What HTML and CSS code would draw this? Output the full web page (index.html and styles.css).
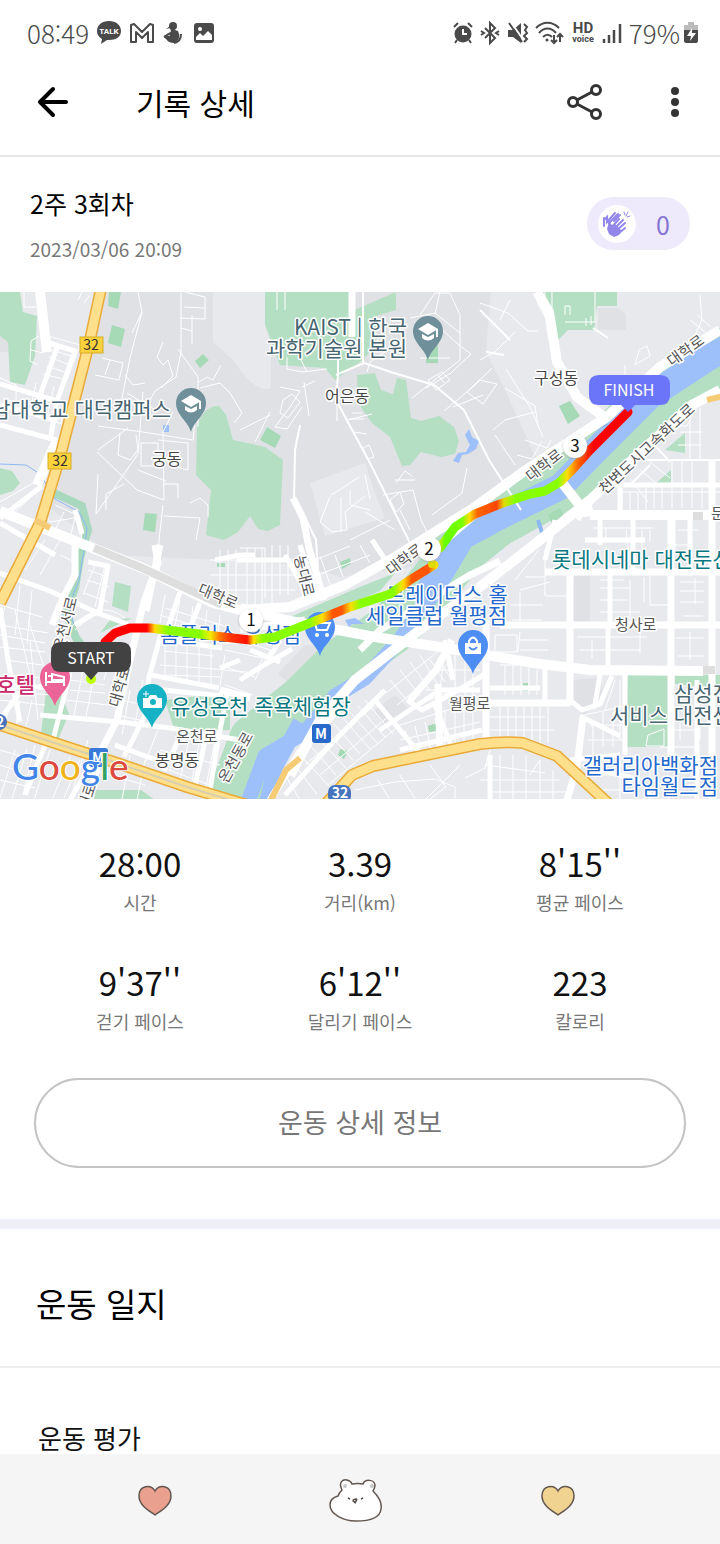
FILE: index.html
```html
<!DOCTYPE html>
<html lang="ko">
<head>
<meta charset="utf-8">
<meta name="viewport" content="width=device-width, initial-scale=1">
<title>기록 상세</title>
<link rel="stylesheet" href="styles.css">
</head>
<body>
<div class="app">
  <div class="status">
    <div class="status-group">
      <span class="status-time">08:49</span>
      <svg class="ico" width="26" height="26" viewBox="0 0 26 26"><path d="M13 1C6 1 1 5 1 11c0 4 2 6 5 8L5 24l6-4h2c7 0 12-3 12-9S20 1 13 1Z" fill="#4a4a4a"/><text x="13" y="14" class="talk">TALK</text></svg>
      <svg class="ico" width="26" height="22" viewBox="0 0 26 22"><path d="M2 20V3l3-1 8 8 8-8 3 1v17h-5V10l-6 6-6-6v10Z" fill="none" stroke="#4a4a4a" stroke-width="2" stroke-linejoin="round"/></svg>
      <svg class="ico" width="22" height="24" viewBox="0 0 22 24"><circle cx="11" cy="5" r="4" fill="#4a4a4a"/><path d="m8 5-4 3 4-1 1 3-2 3 1 2-5-1c-1 1-2 2 1 4 2 3 5 4 8 4 4-2 6-5 5-9l-1-3-3-1V8Z" fill="#4a4a4a"/><path d="m2 16 6-4M19 13c0 5-2 8-7 9" stroke="#4a4a4a" stroke-width="2" fill="none"/></svg>
      <svg class="ico gallery" width="22" height="22" viewBox="0 0 22 22"><path fill-rule="evenodd" fill="#4a4a4a" d="M4 1h14q3 0 3 3v14q0 3-3 3H4q-3 0-3-3V4q0-3 3-3Zm-1 14v3h16v-5l-4-4-5 5-3-3Z"/><circle cx="7" cy="7" r="2" fill="#fff"/></svg>
    </div>
    <div class="status-group right">
      <svg class="ico" width="20" height="22" viewBox="0 0 20 22"><circle cx="10" cy="12" r="8.500" fill="#4a4a4a"/><path d="m1 5 4-4M19 5l-4-4M4 18l-2 3M16 18l2 3" stroke="#4a4a4a" stroke-width="2"/><path d="M10 7v5h4" stroke="#fff" stroke-width="2" fill="none"/></svg>
      <svg class="ico" width="20" height="22" viewBox="0 0 20 22"><path d="m5 6 10 10-5 5V1l5 5L5 16M1 9l3 2-3 2M19 9l-3 2 3 2" fill="none" stroke="#4a4a4a" stroke-width="2"/></svg>
      <svg class="ico" width="21" height="22" viewBox="0 0 21 22"><path d="M1 8h5l8-7v20l-8-6H1Z" fill="#4a4a4a"/><path d="M4 0 17 19" stroke="#fff" stroke-width="2"/><path d="M2 1 15 20" stroke="#4a4a4a" stroke-width="2"/><path d="m17 2 3 3-2 3 2 3-3 3 3 3-3 3" fill="none" stroke="#4a4a4a" stroke-width="2"/></svg>
      <svg class="ico" width="29" height="24" viewBox="0 0 29 24"><g fill="none" stroke="#4a4a4a" stroke-width="2"><path d="M1 7c7-7 16-7 23 0M4 12c5-6 12-6 17 0M8 16c3-3 6-3 9 0"/><path d="M19 14v8m-3-3 3 3 3-3M25 21v-8m-3 3 3-3 3 3"/></g><circle cx="12" cy="19" r="1.500" fill="#4a4a4a"/></svg>
      <svg class="ico" width="24" height="24" viewBox="0 0 24 24"><text x="12" y="12" class="hd">HD</text><text x="12" y="21" class="voice">voice</text></svg>
      <svg class="ico" width="20" height="22" viewBox="0 0 20 22"><path d="M2 17v4M7 13v8M12 8v13M18 2v19" stroke="#4a4a4a" stroke-width="2.500"/></svg>
      <span class="status-time">79%</span>
      <svg class="ico" width="16" height="24" viewBox="0 0 16 24"><path d="M5 1h6v3h4v6H1V4h4Z" fill="#bbb"/><path d="M1 9h14v11q0 2-2 2H3q-2 0-2-2Z" fill="#4a4a4a"/><path d="m9 7-5 8h4l-1 5 6-8H9Z" fill="#fff"/></svg>
    </div>
  </div>

  <header class="header">
    <button class="icon-button back" aria-label="뒤로"><svg width="32" height="32" viewBox="0 0 32 32"><path d="M29 16H3M16 3 3 16l13 13" fill="none" stroke="#000" stroke-width="4" stroke-linecap="round" stroke-linejoin="round"/></svg></button>
    <h1 class="title">기록 상세</h1>
    <button class="icon-button share" aria-label="공유"><svg width="36" height="38" viewBox="0 0 36 38"><g fill="none" stroke="#333" stroke-width="3"><path d="m10 17 15-8M10 21l15 8"/><circle cx="6" cy="19" r="4.500"/><circle cx="29" cy="7" r="4.500"/><circle cx="29" cy="31" r="4.500"/></g></svg></button>
    <button class="icon-button more" aria-label="더보기"><svg width="10" height="32" viewBox="0 0 10 32"><g fill="#333"><circle cx="5" cy="5" r="4"/><circle cx="5" cy="16" r="4"/><circle cx="5" cy="27" r="4"/></g></svg></button>
  </header>

  <main class="content">
    <section class="summary">
      <div>
        <h2 class="session">2주 3회차</h2>
        <time class="date">2023/03/06 20:09</time>
      </div>
      <button class="clap" aria-label="박수 0">
        <span class="clap-icon"><svg width="30" height="30" viewBox="0 0 30 30"><g fill="none" stroke="#9286ea" stroke-width="2" stroke-linecap="round"><path d="M2 17V9M3 10l2-2v5l8-9M7 14l9-9M12 12l6-6"/><path d="m8 19-1-8M10 18l7-8M12 20l9-9M14 22l9-8M17 24l6-5"/><path d="m22 3 1 3M26 3l-2 4M28 7l-3 1" stroke-width="1"/></g><path d="m7 13 4 4 2-2 7 7-3 4-5 2-5-3-2-5Z" fill="#9286ea"/></svg></span>
        <span class="clap-count">0</span>
      </button>
    </section>

    <svg class="map" viewBox="0 292 720 507" role="img" aria-label="달리기 경로 지도">
      <defs>
        <linearGradient id="pace" gradientUnits="userSpaceOnUse" x1="0" y1="0" x2="720" y2="0">
          <stop offset=".204" stop-color="#f00"/><stop offset=".215" stop-color="#fd0"/><stop offset=".232" stop-color="#8f0"/><stop offset=".278" stop-color="#8f0"/><stop offset=".292" stop-color="#ee0"/><stop offset=".305" stop-color="#f70"/><stop offset=".32" stop-color="#f30"/><stop offset=".343" stop-color="#f10"/><stop offset=".352" stop-color="#fd0"/><stop offset=".365" stop-color="#8f0"/><stop offset=".43" stop-color="#8f0"/><stop offset=".448" stop-color="#fd0"/><stop offset=".462" stop-color="#f50"/><stop offset=".475" stop-color="#f50"/><stop offset=".487" stop-color="#fd0"/><stop offset=".5" stop-color="#8f0"/><stop offset=".547" stop-color="#8f0"/><stop offset=".56" stop-color="#fd0"/><stop offset=".572" stop-color="#f50"/><stop offset=".595" stop-color="#f50"/><stop offset=".606" stop-color="#fd0"/><stop offset=".618" stop-color="#6f0"/><stop offset=".642" stop-color="#7f0"/><stop offset=".652" stop-color="#fd0"/><stop offset=".663" stop-color="#f60"/><stop offset=".69" stop-color="#f40"/><stop offset=".7" stop-color="#dd0"/><stop offset=".715" stop-color="#8f0"/><stop offset=".775" stop-color="#8f0"/><stop offset=".788" stop-color="#fd0"/><stop offset=".803" stop-color="#f60"/><stop offset=".825" stop-color="#f00"/>
        </linearGradient>
        <path id="pin" d="M0 29C-3 18-15 12-15 0a15 15 0 0 1 30 0C15 12 3 18 0 29Z"/>
        <g id="cap" fill="#fff"><path d="m-10-2 10-6 10 6-10 6Z"/><path d="M-6 3v4q6 5 12 0V3L0 6ZM8-2h2v8H8Z"/></g>
      </defs>
      <rect class="land" x="0" y="292" width="720" height="508"/>
      <g class="campus">
        <path d="M105 292h108v50l22 20q20 32 36 26V292h220l-5 60 20 40 50 110-75 20-70 45-70 10-40-12-80-5-110-5-65-50L70 430Z"/>
        <path d="M598 308h20l8 6v16h-28Z"/>
        <path d="M0 292h20v60H0ZM570 577l20-3v48h-20ZM375 710l20-15 15 15-25 20ZM571 680l30-2 2 20-20 18-12-12ZM305 645l40 3-25 22-30 14-12-10Z"/>
      </g>
      <path class="land" d="m310 483 55-20 10 30 10 25-60 18Z"/>
      <g class="park">
        <path d="M0 292h20l3 20 14 4-2 40-10 29-15-3-2-40-8-6ZM0 468l12 3 8 12-7 8-13 4ZM197 425q8-20 22-19l7 9 7 25 32 7 18 13-3 65-12 6-10-2-8-13-12 16-14 8-18-5 5-45-15-15ZM265 292h85v20l46-20v18l-20 6v30l-16 16-25 18-10-12-45-3-15-40ZM357 375l18-2 6 17 12 4 4-16 9 2 5 38 10 3 18-5 15 11 5 14-4 13-14 3-20-5-11 13-8 1-12-29-18-14-14-20Z"/>
        <path d="M542 292h75v14h-20l-3 24h-26l-14 14-8-20ZM115 582l16 4-3 26-16-6ZM165 700l65-8v38l-55 2ZM46 692l11-8 12 30-12 28H40ZM628 674h40v73h-44ZM675 675h45v13l-45-4ZM96 790l45 0 14 10H92ZM110 620l22-2-32 15ZM290 617l65-28 40-16-15 18-70 30ZM665 450l20-17v20ZM655 484l16-14v12Z"/>
        <path class="river-bank" d="m750 340-40 24-60 38-50 50-40 34-65 36-35 28-35 45-35 35-50 35-35 35-50 40-30 80"/>
        <path class="creek-bank" d="m52 492 30 14 6 24-8 28-5 30-9 25 10 25 15 20"/>
      </g>
      <g class="park dark">
        <path d="M109 292h12l-3 17-10-3ZM112 325l13 4-4 18-13-4ZM195 361l8-7 6 6-9 8ZM145 513l12 1-2 18-12-2ZM267 427l14 9-6 12-15-8ZM426 345h12v18h-12ZM559 406l11-5 10 15-12 8ZM340 562l10-4 1 6-9 5ZM428 726l9-3 0 8-8 1ZM340 749l8 2-4 8-6-4ZM217 563h8v4h-8ZM523 683h5v8h-5ZM548 515l12-7 4 8-12 8Z"/>
      </g>
      <g class="water">
        <path class="river" d="m740 340-35 20-55 36-50 50-40 41-65 32-33 18-20 34-20 30"/>
        <path class="river thin" d="m428 598-28 42-35 38-30 18-30 36-40 24-20 54M300 722l-25 46-10 40"/>
        <path d="m465 435 4-6 3 8 7 4-3 8-8 5-6 1-3 8-6-2 5-8 8-1 4-7ZM163 425h6v7h-6ZM345 620l10-2 9 6-12 0-3 3Z"/>
        <path class="brook" d="m0 464 26 1 14 9 15 25 24 13 8 16-3 22-5 30-10 25 5 20"/>
        <path class="brook wide" d="m600 422 12 8M538 520l5 16"/>
      </g>

      <g class="street minor">
        <path d="M45 335l35 10-13 35-24-6M38 365l-8-4 1-20 8-5M52 350l22 7M49 357l21 8M47 366l20 7M31 350l12 3M24 292v15h12M82 292l-4 8M90 295l-6 8M0 378l16 7v16M36 383l-6 28M8 400l36 14-2-22M54 386l-8 36M60 410l2 14-18-6M0 502l35-20M38 490l-28 27 25 10M55 505l22 10 5 25-30-8M64 512l-10 20M75 517l-5 22M42 510l8 12 30-5"/>
        <path d="M138 292l4 20-12 46-8 40 4 20M142 312l-10 21M102 358l21 5-4 17-24-5M110 360l-5 15M125 375l8 10 12-2M127 393l13 8 18 10M181 292v60l-5 25-21 14-9 16M178 349l20 28v50M185 292l20 5v22l-25-1M184 307l20 1M192 315v29M181 328l11 3M163 342l-6 15 6 8 5-5 5 16-12 12M199 382l8-5 6 3 8-15M200 388l20-5 10 10 12 20-8 10M143 392l-5 62-42 60 2-40M98 426l45 6 50 8 3-30M98 450l30-22M120 433l-2 22 12 5 8-10-2-15M97 452l40 38 27 10M164 500l-1-68 10-20M141 443h17v23h-17ZM158 440l30 3v27l-20-5M164 484h14v14M138 470l28 11M124 484l-18 10 0 16M163 505l-4 35 0 40M164 516l36 2-4 22M190 503l10-5 8 7v12"/>
        <path d="M287 357l0 12 15 3 25-3M300 358l7 14M280 387l20 4-10 16-15 20 12 2 15-22M283 400l9-6 8 8-12 16-8-5ZM302 387l13-6M304 382l5 34M337 385v36M350 419h14M347 420l25-6M353 432l14 2M270 412l-15 30M240 430l30-15M363 448l6-3 5 12-6 2ZM352 413h10M367 372l3-10 15-10M396 373l-5 0M410 318l25-5 25 20M440 328l19 17 12 9-20 19-25 15M420 358h30M440 292l-5 22M460 346v14M420 315l15-22h15l10 22 0 30"/>
        <path d="M428 380l14-8 8 8-14 10ZM438 375l6 8M444 411l30-25 18-18M412 398l48-38M467 392l12-12 18 4-14 20ZM453 407l30-12M285 292v18M277 292v18M331 495l10-6 18-12M330 497l-10 25 12 10 15-2-2-18 20-16M341 497l0 35M350 490l0 15 20 5M365 475l5 24M395 480h20M396 483l9-12 7 5M383 495l30-5 8 30 10 20M390 500l10-8 4 12-8 8ZM432 515l30-22 5-25"/>
        <path d="M480 303l28 10 20 18 10 0M515 332l-20 20-15 8M506 369l25 40 12 28M493 430l12-10 30-8M538 292v12l10 18M545 292v14M552 292v16M565 315v-9h5v9M586 318v8M591 316v9M595 292v30h-30M505 388l30 18 3 20M495 435l20 30M510 300l-10 20M525 440l22 8 4-8M517 455l15 4 10-18M635 365l4-15 8-4 3 10-12 7ZM700 295l2 25-10 22M690 320l18 14M697 315l14 12M625 365v12"/>
        <path d="M695 410l-8 16h-18M690 420v40M680 432h22M678 445h24M700 408v52"/>
        <path d="M630 478l18 24M640 470l20 16M650 462l20 16M622 488v22M630 492v18M638 492v18M646 488v22M654 487v22M662 487v22M672 460v48M682 460v48M692 460v48M702 487v22M710 487v22M622 492h98"/>
        <path d="M593 528h60M600 540v-12M606 540v-12M626 530l3 24M634 530v22M642 530v18M650 530v12M668 545h24M678 530h20"/>
        <path d="M515 580l24-30M520 590l30-8M525 577l20 0M545 550v46M570 596h-24M520 592v32M510 605h33M512 620h30M600 580h24M600 588h30M600 600h27M600 612h40M650 575v30h20M630 580v40M644 577v25M680 582h24M695 578v26M680 591h24M680 602h24M683 616h20M495 635h22v17h-22ZM520 632l-2 20M520 640h28M520 650h28M577 637h70M580 650h60M592 640v18M607 632v24M676 638h28M690 632v28M678 656h26M640 633v20"/>
        <path d="M500 665h40M505 665v30M513 665v30M521 665v30M529 665v30M537 670v25M490 687h50M490 717h55M500 707v36M508 707v36M516 707v36M524 707v36M532 707v36M540 707v36M548 707v36M490 730h64M615 680l-10 30M600 680l-6 30M580 716l45-10M593 720v35M603 712v35M613 712v35M620 680v60M590 725h34M588 740h35M585 765h40M600 775h30M620 755v45M635 755v45M650 765v35M590 790h45M660 747h40M680 720v20M700 710v30M675 730h20M648 735l16-6v17h-18Z"/>
      </g>
      <g class="street minor">
        <path d="M240 548h25v50M247 548v60M255 548v60M262 548v60M272 545v60M280 545v50M288 545v50M220 550v50M228 550v50M236 550v50M210 560h85M210 575h85M210 590h85M300 550l20 50M310 550l15 46M320 556l12 34M335 555l8 22M300 566l50-20M305 580l65-25M310 594l70-27M360 545l10 18M375 540l8 18M350 540l40-20M395 530l-30-18M400 510l10 20"/>
        <path d="M165 595l-5 28M180 600l-5 26M193 606l-3 24M207 610l-3 26M220 615l-2 20M165 608l60 18M160 615l55 17M165 640l55 8M164 651l50 5M160 665l55 4M165 675l55 2M165 637v40M176 645v36M187 645v36M199 645v36M211 645v40M225 650l38 8-8 15-40-4M240 640l30 10-15 30M220 665l35 12M225 655l-5 30M225 685l28 10M180 735l-10 35M190 735l-10 45M200 738l-8 43M215 740l-10 52M155 765l55 20M160 750l60 15M228 700l-6 25"/>
        <path d="M0 625l48 8M0 635l45 8M0 647l45 5M5 660l45 6M10 675l30 3M0 605l42 12M10 580l-8 40M20 585l-5 50M32 590l-5 54M15 610l15 65M28 620l15 44M0 690l50 5M0 700l45 5M10 700l-6 30M20 700l-5 32M32 700l-8 35M30 640l8 80M0 750l20 6M0 765l18 6M0 780l35 8M35 745l-12 50M50 750l-16 50M70 757l-18 43M80 760l-16 38M0 798l15-48M12 799l15-50M40 575l20-35M60 555l15 7M25 570l20-30"/>
        <path d="M88 570l20 7M87 580l22 7M84 593l24 9M95 565l-12 30M105 565l-10 42M70 628q30-30 55-10M75 630q15-15 25-16M82 650l20-8M95 652l15-8M112 650l-8 30M120 650l-6 30M70 680l35 5M70 690l35 3M66 700l42 5M83 670l-10 50M95 670l-10 52M88 740l-15 50M105 745l-12 50M75 765l70 20M130 755l-8 45M145 760l-8 40M160 725l-18 45M130 690l-8 45M143 680l-8 45M120 700l25 5M115 715l25 5"/>
      </g>
      <g class="street minor">
        <path d="M390 680l20 24M400 670l20 26M410 662l20 28M420 655l18 30M430 660l15 22M438 660l14 20M386 693l60-48M397 705l50-40M430 700l40-18M310 745l26 30M318 738l28 30M326 731l28 30M334 724l26 30M342 717l28 32M350 712l28 32M358 706l28 32M365 700l28 34M305 765l70-60M320 775l70-60M328 785l72-60M300 755l30 32M292 762l25 32M285 775l15 25M405 730l10 30M415 726l8 32M425 722l7 33M435 718l6 35M445 710v42M455 705v42M464 705v42M473 705v40M400 740l80-18M400 725l80-25M405 755l80-18M425 690h55M445 650l-5 40M455 652v40M465 655v40M473 655v50M440 670h40"/>
        <path d="M355 790l40-8 40-3 20 8v13M378 780l12 20M400 775l16 25M430 765l16 22-20 15M490 750l-5 18-20 10M500 755v45M513 755v45M526 755v45M540 760v40M553 770v30M485 765l60 8M480 780h80M490 792h80M460 765l-35 35M540 760l-10 15"/>
      </g>
      <g class="street medium">
        <path d="M40 292l5 50M0 384l57 17-7 40M0 405l25 6 32 10M58 295M0 425l56 15-16 43M0 518l42-32M55 555l-55-32M46 342l29 9-18 50M58 345l-20 56M0 573l50 18 50 23 33 12M0 607l8 53 12 62M75 510l7 24M163 627l-14 50-5 40-20 40M0 685l60 3M0 720l20-28M40 715l80 7 50 6 70 12M70 673l-17 67M167 640l55 8M184 728l-20 43M207 733l-12 52M228 690l-10 50-8 50M151 675l68 13M163 690l60 6M115 745l50 18M90 765l-20 35M45 745l-20 50M88 562l20 4-8 44-25 15M180 592l-12 35M200 603l-12 30M215 560l25-5 15 0M240 660l-20 8M240 680l24-15 28-16M250 650l30 12M280 640l-12 20"/>
        <path d="M300 545l15 45M285 555l17 30 5 18M237 560h50M372 540l20 30M480 512l-35 30M407 700l15 10 40-22 25-15M375 700l50 60M385 690l-55 55-45 50M445 640l8 40M480 690h-40l-60 40M400 750l82-20M435 705l18 45M590 500l-12 20M555 520l-10 40M600 515v30M633 515v55M585 540h60M613 485h110M620 470v42M673 515v36M690 515v60M600 675l-5 30M625 675v80M570 670l0 30 12 10 18-6 12-28M490 688h50M545 660v40M580 716l40 20M570 760l50-5M600 770l40 10M697 680v120M490 755v45M610 575v50M608 625v40"/>
      </g>
      <g class="street thin">
        <path d="M363 292v70M300 425l-5 25-1 50 10 15 12 25 4 60M338 345v30l-2 25 35 65 45 90M336 375l28-12 30 10 40 12 30 25 25 50 32 50M480 310l30 30M504 355l-18-3M593 328l15 10M630 460h90M650 465l-20 20M650 440l20 22"/>
      </g>
      <g class="street major">
        <path class="w6" d="M75 540v35l-13 25-10 25M155 545l3 18-15 42-16 68-10 47-17 33-10 47M352 292v45M293 498l10 20 6 30 15 52M570 572v133M671 515v240M712 460v340M486 620v120M545 572h175M500 625h220M490 703h80M583 717l-6 50-10 33M452 640l-16 30-26 30M440 754l-2-70M270 800l30-48 40-45M220 690l30 8"/>
        <path class="w9" d="M0 511l85 34 60 24 68 34 27 7 50-3 55-22 50-28 80-50 48-35 84-55 53-50 60-37M537 292l12 20 8 50 20 35 30 22M40 292l7 60M57 440l-20 45M560 480l25 32 8-2M720 390l-28 15-60 55-42 40-50 40-60 47-50 35-75 58-35 40-30 55M590 515h130M240 608l45 12 90 17 65 10 40 7 60 10 50 6 113 1"/>
        <path class="w6" d="M240 630l65-10M360 650l20-20 90-55 30-14M160 545l-14 66"/>
        <path class="tunnel" d="m94 548 48 20 65 30 15 7M693 516h10M703 670h12"/>
      </g>
      <path class="river narrow" d="m455 562-27 38-15 22"/>
      <g class="highway">
        <path class="case" d="M102 284 90 340 60 457 40 523 28 547 0 603M0 725l67 22 50 16 70 24 60 18M322 808l30-33 21-9 107-22q25-3 43-1l34 13 25 23 30 28"/>
        <path d="M102 284 90 340 60 457 40 523 28 547 0 603M0 725l67 22 50 16 70 24 60 18M322 808l30-33 21-9 107-22q25-3 43-1l34 13 25 23 30 28"/>
        <path class="ramp" d="m300 758-14 12-16 32M707 400l20-5M35 520l15 8"/>
        <path class="centre" d="m0 725 67 22 50 16 70 24 60 18"/>
      </g>

      <g class="shield"><rect x="80" y="337" width="23" height="16"/><rect x="48" y="453" width="23" height="16"/></g>
      <g class="shield-text"><text x="91" y="350">32</text><text x="60" y="466">32</text></g>
      <rect x="328" y="785" width="23" height="18" rx="7" fill="#4774bd"/><text class="badge-text" x="340" y="798">32</text>
      <circle cx="-1" cy="722" r="8" fill="#4774bd"/><text class="badge-text" x="0" y="727">2</text>
      <rect x="312" y="724" width="19" height="19" rx="3" fill="#2969c9"/><text class="badge-text" x="321" y="739">M</text>
      <rect x="89" y="748" width="19" height="19" rx="3" fill="#3979d9"/><text class="badge-text" x="98" y="763">M</text>

      <g class="poi slate"><text class="end" x="407" y="335">KAIST | 한국</text><text class="end" x="407" y="356">과학기술원 본원</text><text class="end" x="171" y="417">남대학교 대덕캠퍼스</text><text x="610" y="723">서비스 대전센터</text><text x="674" y="701">삼성전자</text></g>
      <g class="poi teal"><text x="552" y="567">롯데시네마 대전둔산</text><text x="171" y="714">유성온천 족욕체험장</text></g>
      <g class="poi blue"><text x="386" y="602">트레이더스 홀</text><text x="366" y="623">세일클럽 월평점</text><text x="160" y="642">홈플러스 유성점</text><text class="end" x="718" y="773">갤러리아백화점</text><text class="end" x="718" y="794">타임월드점</text></g>
      <text class="poi pink end" x="35" y="692">호텔</text>
      <g class="place"><text x="325" y="402">어은동</text><text x="152" y="465">궁동</text><text x="534" y="384">구성동</text><text x="155" y="766">봉명동</text></g>
      <g class="road-name">
        <text x="615" y="630">청사로</text><text x="449" y="709">월평로</text><text x="176" y="742">온천로</text><text x="711" y="519">둔산</text>
        <text transform="translate(672 367) rotate(-36)">대학로</text><text transform="translate(531 482) rotate(-38)">대학로</text><text transform="translate(391 576) rotate(-37)">대학로</text><text transform="translate(197 593) rotate(23)">대학로</text>
        <text transform="translate(605 495) rotate(-43)">천변도시고속화도로</text><text transform="translate(119 708) rotate(-74)">대학로</text><text transform="translate(64 652) rotate(-76)">온천서로</text><text transform="translate(294 557) rotate(76)">농대로</text><text transform="translate(227 784) rotate(-61)">온천동로</text><text transform="translate(88 811) rotate(-72)">대로</text>
      </g>

      <g class="pins">
        <use href="#pin" x="428" y="331" fill="#6f8f9b"/><use href="#cap" x="428" y="331"/>
        <use href="#pin" x="191" y="403" fill="#6f8f9b"/><use href="#cap" x="191" y="403"/>
        <use href="#pin" x="320" y="627" fill="#4d8df4"/><path d="M311 620h3l3 10h10l3-7h-13" fill="none" stroke="#fff" stroke-width="2"/><circle cx="317" cy="635" r="2" fill="#fff"/><circle cx="327" cy="635" r="2" fill="#fff"/>
        <use href="#pin" x="473" y="645" fill="#4d8df4"/><path d="M465 643h16v11h-16Z" fill="#fff"/><path d="M469 644v-3q4-7 8 0v3" fill="none" stroke="#fff" stroke-width="2"/><path d="M469 647q4 5 8 0" fill="none" stroke="#4d8df4" stroke-width="2"/>
        <use href="#pin" x="55" y="677" fill="#ec6398"/><path d="M46 672v14M46 682h18v4M64 684v-7l-12-3v6h12M48 676h3" fill="none" stroke="#fff" stroke-width="2"/>
        <use href="#pin" x="152" y="699" fill="#16b1c4"/><path d="M143 698h5l2-3h6l2 3h4v10h-19Z" fill="#fff"/><circle cx="153" cy="702" r="3" fill="#16b1c4"/><path d="M146 691v6M143 694h6" stroke="#fff" stroke-width="1"/>
      </g>

      <path class="route" d="M105 642 115 633 130 628H150L215 636 250 640 275 637 310 623 350 607 390 594 410 580 434 565M440 548 455 527 475 514 500 504 530 494 545 491 560 482 572 470 590 450 610 430 628 412"/>
      <circle cx="91" cy="679" r="5" fill="#bf0"/>
      <circle cx="432" cy="564" r="4" fill="#dd0"/>
      <g class="marker"><circle cx="251" cy="620" r="12"/><circle cx="429" cy="549" r="12"/><circle cx="575" cy="446" r="12"/></g>
      <g class="marker-text"><text x="251" y="626">1</text><text x="429" y="555">2</text><text x="575" y="452">3</text></g>
      <path d="M61 642h60q10 0 10 10v10q0 10-10 10H98l-7 8-7-8H61q-10 0-10-10v-10q0-10 10-10Z" fill="#424242"/><text class="tag" x="91" y="664">START</text>
      <path d="M599 375h61q10 0 10 10v10q0 10-10 10h-25l-7 7-7-7h-22q-10 0-10-10v-10q0-10 10-10Z" fill="#6a75fa"/><text class="tag" x="629" y="396">FINISH</text>
      <text class="google" x="12" y="780"><tspan fill="#4285e8">G</tspan><tspan fill="#dc4a3e">o</tspan><tspan fill="#f0b41c">o</tspan><tspan fill="#4285e8">g</tspan><tspan fill="#34a265">l</tspan><tspan fill="#dc4a3e">e</tspan></text>
    </svg>

    <section class="stats-section">
      <dl class="stats">
        <div class="stat"><dt>시간</dt><dd>28:00</dd></div>
        <div class="stat"><dt>거리(km)</dt><dd>3.39</dd></div>
        <div class="stat"><dt>평균 페이스</dt><dd>8'15''</dd></div>
        <div class="stat"><dt>걷기 페이스</dt><dd>9'37''</dd></div>
        <div class="stat"><dt>달리기 페이스</dt><dd>6'12''</dd></div>
        <div class="stat"><dt>칼로리</dt><dd>223</dd></div>
      </dl>
      <button class="detail-button">운동 상세 정보</button>
    </section>

    <section class="diary">
      <h2 class="diary-title">운동 일지</h2>
      <h3 class="diary-label">운동 평가</h3>
    </section>
  </main>

  <nav class="tabs">
    <button class="tab" aria-label="최근 앱"><svg width="36" height="34" viewBox="0 0 36 34"><path d="M18 7C14 0 2 1 2 12c0 9 9 14 16 19 7-5 16-10 16-19C34 1 22 0 18 7Z" fill="#e9a08e" stroke="#625750" stroke-width="1.500"/></svg></button>
    <button class="tab" aria-label="홈"><svg width="54" height="48" viewBox="0 0 54 48"><path d="M13 13C9 5 14 2 18 3q4 1 5 4 6-1 11 0c2-5 11-5 12 1q0 3-2 6c6 6 9 13 8 18-1 9-12 12-25 12S1 37 1 28c0-6 4-8 8-9q1-3 4-6Z" fill="#fff" stroke="#625750" stroke-width="1.500"/><ellipse cx="16" cy="9" rx="2" ry="2" fill="#c8c8c8"/><ellipse cx="43" cy="9" rx="2" ry="2" fill="#c8c8c8"/><path d="m19 21 2 1M34 21l-2 1M28 22q-4 0-4 2 3 2 4-2M25 25l2 1" fill="none" stroke="#554e49" stroke-width="1.500"/></svg></button>
    <button class="tab" aria-label="뒤로 가기"><svg width="36" height="34" viewBox="0 0 36 34"><path d="M18 7C14 0 2 1 2 12c0 9 9 14 16 19 7-5 16-10 16-19C34 1 22 0 18 7Z" fill="#f0d291" stroke="#625750" stroke-width="1.500"/></svg></button>
  </nav>
</div>
</body>
</html>
```

FILE: styles.css
```css
* { box-sizing: border-box; }

body {
  margin: 0;
  background: #fff;
  color: #111;
  font-family: "Noto Sans CJK KR", sans-serif;
}

h1, h2, h3, dl, dd { margin: 0; font-weight: 400; }

button {
  border: 0;
  padding: 0;
  background: none;
  color: inherit;
  font: inherit;
  cursor: pointer;
}

svg { display: block; }

.app {
  display: flex;
  flex-direction: column;
  height: 100vh;
}

/* Status bar */
.status {
  display: flex;
  flex: none;
  justify-content: space-between;
  height: 66px;
  padding: 0 21px 0 27px;
}

.ico { overflow: visible; }
.status-group { display: flex; align-items: center; gap: 7px; }
.status-group.right .status-time + .ico { margin-left: -4px; }
.gallery { margin-left: 2px; }

.status-time {
  color: #4a4a4a;
  font-size: 26px;
  font-weight: 300;
  line-height: 34px;
}

.talk, .hd, .voice { text-anchor: middle; font-family: Roboto, sans-serif; font-weight: 700; }
.talk { fill: #fff; font-size: 8px; }
.hd { fill: #4a4a4a; font-size: 15px; }
.voice { fill: #4a4a4a; font-size: 9px; }

/* App header */
.header {
  display: flex;
  flex: none;
  align-items: center;
  height: 91px;
  padding: 0 40px 18px 37px;
  border-bottom: 2px solid #e8e8e8;
}

.title { flex: 1; margin-left: 67px; font-size: 30px; line-height: 40px; color: #000; }
.more { margin-left: 67px; }

.content { flex: 1; min-height: 0; overflow-y: auto; scrollbar-width: none; }

/* Session summary */
.summary {
  display: flex;
  align-items: center;
  justify-content: space-between;
  height: 135px;
  padding: 0 30px 2px;
}

.session { font-size: 25px; line-height: 36px; color: #000; }
.date { display: block; margin-top: 14px; color: #777; font-size: 19px; line-height: 28px; }

.clap {
  display: flex;
  align-items: center;
  gap: 20px;
  height: 53px;
  padding: 0 20px 0 11px;
  border-radius: 27px;
  background: #eeeafc;
}

.clap-icon { display: grid; place-items: center; width: 38px; height: 38px; border-radius: 50%; background: #fff; }
.clap-count { color: #8575d3; font-size: 25px; line-height: 36px; }

/* Map */
.map { width: 100%; height: auto; overflow: hidden; }
.land { fill: #e7e9ed; }
.campus { fill: #dfe1e5; }
.park { fill: #b5dfc3; }
.park.dark { fill: #a6d9b6; }
.river-bank { fill: none; stroke: #b5dfc3; stroke-width: 52; stroke-linejoin: round; }
.creek-bank { fill: none; stroke: #a8d8bd; stroke-width: 8; }
.water { fill: #9dc0fa; }
.river { fill: none; stroke: #9dc0fa; stroke-width: 26; stroke-linejoin: round; }
.river.thin { stroke-width: 15; }
.river.narrow { stroke-width: 12; }
.brook { fill: none; stroke: #8db8f2; stroke-width: 1; }
.brook.wide { stroke-width: 4; }

.street { fill: none; stroke: #fff; stroke-linejoin: round; }
.street.minor { stroke-width: 1; }
.street.thin { stroke-width: 2; }
.street.medium { stroke-width: 5; }
.w6 { stroke-width: 7; }
.w9 { stroke-width: 10; }
.tunnel { stroke: #dedede; stroke-width: 8; }

.highway { fill: none; stroke: #fddf8c; stroke-width: 9; stroke-linejoin: round; }
.highway .case { stroke: #eaaa38; stroke-width: 12; }
.highway .ramp { stroke: #f5cb75; stroke-width: 6; }
.highway .centre { stroke: #d8ceb0; stroke-width: 2; }

.shield { fill: #fbd23b; stroke: #d5ac27; }
.shield-text { fill: #333; font-size: 14px; text-anchor: middle; }
.badge-text { fill: #fff; font-size: 14px; font-weight: 700; text-anchor: middle; }

.poi, .place, .road-name { stroke: #fff; stroke-width: 3; stroke-linejoin: round; paint-order: stroke; }
.poi { font-size: 21px; }
.place { fill: #454545; font-size: 16px; }
.road-name { fill: #555; font-size: 15px; }
.end { text-anchor: end; }
.slate { fill: #466571; }
.teal { fill: #087780; }
.blue { fill: #2468cd; }
.pink { fill: #cb286d; font-weight: 500; }
.pins use { stroke: none; }

.route { fill: none; stroke: url(#pace); stroke-width: 9; stroke-linecap: round; stroke-linejoin: round; }
.marker { fill: #fff; filter: drop-shadow(0 1px 1px #9999); }
.marker-text { fill: #111; font-size: 17px; text-anchor: middle; }
.tag { fill: #fff; font: 400 16px "Noto Sans CJK KR", sans-serif; text-anchor: middle; }
.google { font: 500 37px Lato, sans-serif; stroke: #fff; stroke-width: 2; paint-order: stroke; }

/* Workout figures */
.stats-section { padding: 40px 30px 51px; }

.stats {
  display: grid;
  grid-template-columns: repeat(3, 1fr);
  row-gap: 43px;
  text-align: center;
}

.stat { display: flex; flex-direction: column-reverse; gap: 2px; }
.stat dt { color: #777; font-size: 18px; line-height: 26px; }
.stat dd { color: #111; font-size: 33px; line-height: 48px; }

.detail-button {
  display: block;
  width: calc(100% - 8px);
  height: 90px;
  margin: 44px 4px 0;
  padding-bottom: 3px;
  border: 2px solid #c4c4c4;
  border-radius: 45px;
  color: #777;
  font-size: 27px;
}

/* Diary */
.diary { border-top: 10px solid #efeff7; }
.diary-title { padding: 50px 36px 39px; border-bottom: 2px solid #eee; font-size: 33px; line-height: 48px; color: #000; }
.diary-label { padding: 51px 38px; font-size: 26px; line-height: 38px; color: #111; }

/* Bottom navigation */
.tabs {
  display: grid;
  flex: none;
  grid-template-columns: repeat(3, 1fr);
  height: 90px;
  padding: 3px 61px 0 54px;
  background: #f5f5f5;
}

.tab { display: grid; place-items: center; }
```
